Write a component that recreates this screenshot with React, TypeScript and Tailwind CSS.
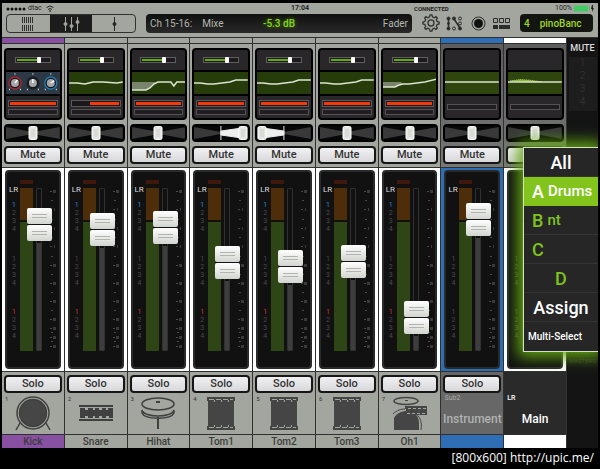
import { ReactNode } from 'react'

type Channel = {
  name: string
  gain?: boolean
  knobs?: boolean
  eq: string
  fill?: string
  bars: number[]
  pan: number
  spread?: 'left' | 'right'
  fader: number
  icon?: ReactNode
}

const Kick = () => (
  <svg width="36" height="36" viewBox="0 0 36 36" fill="none" stroke="#3f403f" strokeWidth="1.5">
    <circle cx="18" cy="17" r="16" />
    <circle cx="18" cy="17" r="13.5" fill="#454645" />
    <path d="M5 27 1 34M31 27l4 7" />
  </svg>
)

const Snare = () => (
  <svg width="36" height="36" viewBox="0 0 36 36" fill="#3f403f">
    <path d="M1 9h34v2H1zM1 23h34v2H1z" />
    <path d="M2 12h5v2h3v-2h5v2h2v-2h4v2h3v-2h4v2h2v-2h5v10h-4v-2h-3v2h-4v-2h-3v2h-4v-2h-2v2h-5v-2H7v2H2z" />
  </svg>
)

const Hihat = () => (
  <svg width="36" height="36" viewBox="0 0 36 36" fill="none" stroke="#3f403f" strokeWidth="1.5">
    <path d="M2 14c2 8 30 8 32 0v3c-3 7-29 7-32 0z" />
    <ellipse cx="18" cy="8" rx="16" ry="6" fill="#a3a69e" />
    <path d="M16 6h4M18 21v12" strokeWidth="2" />
  </svg>
)

const Tom = () => (
  <svg width="36" height="36" viewBox="0 0 36 36" fill="#444544">
    <path d="M4 1h28v4H4zM5 4h26v27H5zM4 30h28v4H4z" />
    <path d="M6 3.500h24M6 31.500h24" stroke="#a3a69e" strokeDasharray="5 2" />
    <path d="M11.500 4v2M18.500 4v2M25.500 4v2M11.500 29v2M18.500 29v2M25.500 29v2" stroke="#a3a69e" />
  </svg>
)

const Overhead = () => (
  <svg width="36" height="36" viewBox="0 0 36 36" fill="#444544">
    <ellipse cx="14" cy="5" rx="12" ry="3.500" fill="none" stroke="#444544" strokeWidth="1.5" />
    <path d="M13 4h3v1h-3z" />
    <path d="M2 34V22c3-6 9-7 14-7 6 0 11 5 11 12v7z" />
    <path d="M1 18c4-4 8-5 12-5M24 18c5 4 6 9 5 16" fill="none" stroke="#444544" />
    <path d="M13 10h22v3H13zM14 13h21v4H14zM13 17h22v2H13z" />
    <path d="M16 12.500h18M15 17.500h18" stroke="#a3a69e" strokeDasharray="3 2" />
  </svg>
)

const tomEq = 'M0 11 6 11 14 12 20 12 28 11 36 10 42 8 54 8'

const channels: Channel[] = [
  { name: 'Kick', gain: true, knobs: true, eq: '', bars: [0, 100], pan: 50, fader: 38, icon: <Kick /> },
  { name: 'Snare', gain: true, eq: 'M0 11 8 11 16 12 24 10 34 10 48 11 54 10', bars: [38, 100], pan: 50, fader: 43, icon: <Snare /> },
  { name: 'Hihat', gain: true, eq: 'M0 18 14 18 18 16 22 12 26 10 39 10 42 14 45 10 54 10', fill: 'M0 10H24L18 16 14 18H0z', bars: [0, 100], pan: 50, fader: 41, icon: <Hihat /> },
  { name: 'Tom1', gain: true, eq: tomEq, bars: [0, 100], pan: 91, spread: 'right', fader: 76, icon: <Tom /> },
  { name: 'Tom2', gain: true, eq: tomEq, bars: [0, 100], pan: 9, spread: 'left', fader: 80, icon: <Tom /> },
  { name: 'Tom3', gain: true, eq: tomEq, bars: [0, 100], pan: 50, fader: 75, icon: <Tom /> },
  { name: 'Oh1', gain: true, eq: 'M0 15 12 15 16 13 20 12 26 12 34 11 42 10 54 7', fill: 'M0 10H18L20 12 16 13 12 15H0z', bars: [0, 100], pan: 50, fader: 131, icon: <Overhead /> },
  { name: 'Instrument', eq: 'M0 10H54', bars: [], pan: 50, fader: 33 },
  { name: 'Main', eq: 'M0 10H54', bars: [], pan: 50, fader: 33 },
]

const Knob = ({ x, color, angle }: { x: number; color: string; angle: number }) => (
  <g transform={`translate(${x} 11)`}>
    <circle r="6" fill="#14181d" stroke={color} strokeWidth="1.5" />
    <circle r="4" fill="#a5a7a8" />
    <path d="M0 0V-4" stroke="#fff" strokeWidth="1.5" transform={`rotate(${angle})`} />
    <path d="M-.5-9h1M-6 6.500h1M5 6.500h1" stroke="#ddd" strokeWidth="1.500" />
  </g>
)

const Processing = ({ channel }: { channel: Channel }) => {
  const { gain, knobs, eq, fill, bars, name } = channel
  const eqColor = knobs ? 'bg-[#2c3945]' : gain ? 'bg-[#273c0b]' : 'bg-[#2e460e]'
  return (
    <div className="mx-[2px] flex h-[72px] flex-col rounded-[4px] border-2 border-black bg-[#2a272b]">
      <div className="flex h-[22px] items-center justify-center border-b-2 border-black">
        {gain && (
          <div className="relative h-[6px] w-9 border border-[#605c60] bg-[#1c1a1c]">
            <div className="mt-px ml-px h-[2px] w-[22px] bg-[#62ad0b]" />
            <div className="absolute -top-px left-[21px] h-[6px] w-1 rounded-[1px] bg-white" />
          </div>
        )}
      </div>
      <svg className={`h-[22px] w-full ${eqColor}`} viewBox="0 0 54 22" preserveAspectRatio="none">
        {knobs ? (
          <>
            <Knob x={9} color="#a72832" angle={40} />
            <Knob x={27} color="#1c2228" angle={0} />
            <Knob x={45} color="#2477a7" angle={55} />
          </>
        ) : (
          <>
            {fill && <path d={fill} fill="#78846b" />}
            {name === 'Main' && <path d="M2 9 12 7.500 20 8 28 9 34 10z" fill="#88bb29" stroke="#a9cc6a" strokeDasharray="1 1" />}
            <path d={eq} fill="none" stroke="#dce3cf" strokeWidth="1.5" />
          </>
        )}
      </svg>
      <div className="flex flex-1 flex-col justify-center gap-[2px] border-t-2 border-black px-[2px]">
        {bars.length > 0 && (
          <div className="flex h-[7px] items-center border border-[#5c575b] bg-[#1b181b] px-px">
            <div className="h-[3px] bg-[#f23b08]" style={{ width: `${bars[1] - bars[0]}%`, marginLeft: `${bars[0]}%` }} />
          </div>
        )}
        <div className="h-[6px] border border-[#555155] bg-[#201e20]" />
      </div>
    </div>
  )
}

const Pan = ({ pan, spread }: { pan: number; spread?: string }) => (
  <div className="relative mx-[2px] mt-1 h-[18px] overflow-hidden rounded-[4px] border-2 border-black bg-[#070707]">
    <svg className="h-full w-full" viewBox="0 0 56 14" preserveAspectRatio="none">
      <path d="M0 1 28 6 56 1V13L28 8 0 13z" fill="#383938" />
      {spread === 'right' && <path d="M28 0v14M28 5 50 2V12L28 9z" fill="#eee" stroke="#eee" />}
      {spread === 'left' && <path d="M28 0v14M28 5 6 2V12L28 9z" fill="#eee" stroke="#eee" />}
    </svg>
    <div
      className="absolute top-0 flex h-[14px] w-[9px] -translate-x-1/2 justify-center gap-px rounded-[2px] border border-white bg-[#e4e6e1] py-[2px]"
      style={{ left: `${pan}%` }}
    >
      <div className="w-px bg-[#ced0cb]" />
      <div className="w-px bg-[#ced0cb]" />
    </div>
  </div>
)

const PadButton = ({ children }: { children: string }) => (
  <button className="mx-[2px] h-[18px] rounded-[4px] border-2 border-[#161616] bg-linear-to-b from-[#f1f1f3] to-[#d8d8da] text-[11px] leading-[14px] font-medium text-[#333]">
    {children}
  </button>
)

const Digits = ({ top, color }: { top: string; color: string }) => (
  <div className={`absolute left-[5px] flex flex-col text-[7px] leading-[8px] text-[#4a4a4a] ${top}`}>
    <span className={color}>1</span>
    <span>2</span>
    <span>3</span>
    <span>4</span>
  </div>
)

const Cap = () => (
  <div className="flex h-4 flex-col items-center justify-center gap-[2px] rounded-[2px] bg-linear-to-b from-white to-[#d2d5cf]">
    <div className="h-px w-[15px] bg-[#b1b4ae]" />
    <div className="h-px w-[15px] bg-[#b1b4ae]" />
  </div>
)

const Fader = ({ channel }: { channel: Channel }) => {
  const { name, fader } = channel
  const isMain = name === 'Main'
  const sub = name === 'Instrument' || isMain
  return (
    <div className="relative mx-[3px] h-[199px] rounded-[4px] border-2 border-[#292b2b] bg-[#111112]">
      {!isMain && <span className="absolute top-[12px] left-[2px] text-[8px] leading-[12px] text-[#ddd]">LR</span>}
      {!sub && <Digits top="top-[29px]" color="text-[#2f86d6]" />}
      <Digits top="top-[83px]" color="text-[#4a4a4a]" />
      <Digits top="top-[136px]" color={sub ? 'text-[#4a4a4a]' : 'text-[#c93a3a]'} />
      <div className="absolute top-[8px] left-[13px] flex w-[13px] flex-col">
        <div className="h-1 bg-[#42170b]" />
        <div className="mt-1 h-8 bg-[#4e2d0b]" />
        <div className="mt-[2px] h-[129px] bg-[#2e4515]" />
      </div>
      <div className="absolute top-[16px] left-[29px] flex h-[163px] w-[6px] flex-col justify-end rounded-[1px] border border-[#303031]">
        <div className="bg-[#3d3d3e]" style={{ height: 145 - fader }} />
      </div>
      <svg className="absolute top-[17px] left-[42px]" width="8" height="165" stroke="#4a4a4a" fill="none">
        <path d="M1 2.500h2M1 20.500h2M1 39.500h2M1 57.500h2M1 76.500h2M1 94.500h2M1 112.500h2M1 130.500h2M1 139.500h2M1 148.500h2M1 157.500h2M2 11.500h2M2 30.500h2M2 48.500h2M2 67.500h2M2 85.500h2M2 103.500h2M2 121.500h2M2 143.500h2M2 152.500h2" />
        <path
          d="M4 2.500h3M5 20.500h1M5 39.500h1M5 57.500h1M4 76.500h3M4 94.500h3M4 112.500h3M4 130.500h3M4 139.500h3M4 148.500h3M4 157.500h3"
          stroke="#3a3a3a"
          strokeWidth="3"
        />
      </svg>
      <div className="absolute left-[20px] w-[25px]" style={{ top: fader - 2 }}>
        <Cap />
        <div className="h-px bg-[#141414]" />
        <Cap />
      </div>
    </div>
  )
}

const Strip = ({ channel, index }: { channel: Channel; index: number }) => {
  const { name, pan, spread, icon } = channel
  const isMain = name === 'Main'
  const isSub = name === 'Instrument'
  const tint = isSub ? 'bg-[#2f6db5]' : isMain ? 'bg-white' : name === 'Kick' ? 'bg-[#8850a2]' : 'bg-[#a3a69e]'
  return (
    <div className="flex min-w-0 flex-1 flex-col border-r border-[#30312f]">
      <div className={`h-[6px] border-b border-[#30312f] ${tint}`} />
      <div
        className={`flex h-[123px] flex-col pt-1 ${
          isSub || isMain ? 'bg-linear-to-b from-[#5c5d5c] to-[#777877]' : 'bg-[#a3a69e]'
        }`}
      >
        <Processing channel={channel} />
        <Pan pan={pan} spread={spread} />
        <div className="mt-1 flex flex-col">
          <PadButton>Mute</PadButton>
        </div>
      </div>
      <div className={`border-t border-[#30312f] py-[2px] ${isSub ? 'bg-[#2f6db5]' : 'bg-white'}`}>
        <Fader channel={channel} />
      </div>
      <div
        className={`relative flex h-[63px] flex-col border-t border-[#30312f] pt-[3px] ${
          isMain ? 'bg-[#2a2a2b]' : isSub ? 'bg-[#666766]' : 'bg-[#a3a69e]'
        }`}
      >
        {!isMain && <PadButton>Solo</PadButton>}
        {icon && (
          <>
            <span className="absolute top-[24px] left-[3px] text-[6px] leading-[6px] text-[#333]">{index + 1}</span>
            <div className="mt-[3px] flex justify-center">{icon}</div>
          </>
        )}
        {isSub && (
          <>
            <span className="mt-px pl-[3px] text-[7px] leading-[9px] text-[#aaa]">Sub2</span>
            <span className="mt-2 text-center text-[12px] leading-[16px] font-medium text-[#b0b1b1]">Instrument</span>
          </>
        )}
        {isMain && (
          <>
            <span className="mt-[19px] pl-[3px] text-[7px] leading-[9px] font-medium text-white">LR</span>
            <span className="mt-2 text-center text-[12px] leading-[16px] font-medium text-white">Main</span>
          </>
        )}
      </div>
      <div className={`h-[14px] border-t border-[#30312f] text-center text-[10px] leading-[14px] font-medium text-[#3c3d3b] ${tint}`}>
        {icon && name}
      </div>
    </div>
  )
}

const ViewTabs = () => (
  <div className="flex h-[19px] w-[130px] overflow-hidden rounded-[4px] border border-[#30312f]">
    <button aria-label="Overview" className="flex flex-1 items-center justify-center">
      <svg width="12" height="16" stroke="#30312f">
        <path d="M.5 1v6M2.500 1v6M4.500 1v6M6.500 1v6M8.500 1v6M10.500 1v6M.5 9v6M2.500 9v6M4.500 9v6M6.500 9v6M8.500 9v6M10.500 9v6" />
      </svg>
    </button>
    <button aria-label="Mixer" className="flex flex-1 items-center justify-center bg-[#1c1c1c]">
      <svg width="18" height="16" stroke="#a3a69e" fill="#a3a69e">
        <path d="M3.500 1v14M9.500 1v14M15.500 1v14" />
        <circle cx="3.500" cy="8" r="1.500" />
        <circle cx="9.500" cy="10" r="1.500" />
        <circle cx="15.500" cy="6" r="1.500" />
      </svg>
    </button>
    <button aria-label="Channel" className="flex flex-1 items-center justify-center">
      <svg width="8" height="16" stroke="#252525" fill="#252525">
        <path d="M4.500 1v14" />
        <circle cx="4.500" cy="8" r="1.500" />
      </svg>
    </button>
  </div>
)

const Tools = () => (
  <div className="flex items-center gap-[6px] text-[#2d2e2c]">
    <button aria-label="Settings">
      <svg width="18" height="18" viewBox="-9.500 -9.500 19 19" fill="none" stroke="currentColor" strokeWidth="1.300">
        <path d="M-1.500-6.500-1-8.500H1L1.500-6.500 3.500-5.600 5.300-6.700 6.700-5.300 5.600-3.500 6.500-1.500 8.500-1V1L6.500 1.500 5.600 3.500 6.700 5.300 5.300 6.700 3.500 5.600 1.500 6.500 1 8.500H-1L-1.500 6.500-3.500 5.600-5.300 6.700-6.700 5.300-5.600 3.500-6.500 1.500-8.500 1V-1L-6.500-1.500-5.600-3.500-6.700-5.300-5.300-6.700-3.500-5.600z" />
        <circle r="3.200" />
      </svg>
    </button>
    <button aria-label="Routing">
      <svg width="17" height="15" fill="none" stroke="currentColor">
        <path d="M2.500 3v9M8 3l6 9" strokeWidth="1.500" />
        <g fill="currentColor">
          <circle cx="2.500" cy="2.500" r="1.500" />
          <circle cx="8" cy="2.500" r="1.500" />
          <circle cx="2.500" cy="7.500" r="1" />
          <circle cx="2.500" cy="12.500" r="1.500" />
          <circle cx="14" cy="12.500" r="1.500" />
        </g>
        <circle cx="14" cy="2.500" r="1.500" />
        <circle cx="14" cy="7.500" r="1.500" />
        <circle cx="8" cy="12.500" r="1.500" />
      </svg>
    </button>
    <button aria-label="Record" className="ml-[2px]">
      <svg width="15" height="15">
        <circle cx="7.500" cy="7.500" r="6.500" fill="none" stroke="currentColor" />
        <circle cx="7.500" cy="7.500" r="4.500" fill="#111" />
      </svg>
    </button>
    <button aria-label="Groups" className="ml-px">
      <svg width="17" height="13" fill="none" stroke="currentColor">
        <path d="M.5 1.500h4v4h-4zM6.500 1.500h4v4h-4zM12.500 1.500h4v4h-4z" />
        <path d="M0 8h5v4H0zM6 8h11v4H6z" fill="currentColor" stroke="none" />
      </svg>
    </button>
  </div>
)

const GroupMenu = () => {
  const item = 'flex h-[29px] w-full items-center border-b border-[#343435] text-[18px] leading-[29px]'
  return (
    <div className="absolute top-[144px] right-0 w-[75px] border border-r-0 border-[#d5dfcb] bg-[#262627] font-medium text-white shadow-[0_0_14px_5px_#64a812]">
      <button className={`${item} justify-center`}>All</button>
      <button className="flex h-[29px] w-full items-center gap-1 bg-[#82c31c] pl-2 text-[18px]">
        A <span className="text-[15px]">Drums</span>
      </button>
      <button className={`${item} gap-1 pl-2 text-[#7ec21c]`}>
        B <span className="text-[15px]">nt</span>
      </button>
      <button className={`${item} pl-2 text-[#7ec21c]`}>C</button>
      <button className={`${item} justify-center text-[#7ec21c]`}>D</button>
      <button className={`${item} justify-center`}>Assign</button>
      <button className="flex h-[29px] w-full items-center pl-1 text-[10px] whitespace-nowrap">Multi-Select</button>
    </div>
  )
}

export default function App() {
  return (
    <div className="min-h-screen bg-black px-[2px] pt-[3px] font-[Roboto,sans-serif]">
      <main className="relative overflow-hidden bg-[#161617]">
        <header className="bg-[#a3a69e] text-[#252525]">
          <div className="grid h-[11px] grid-cols-3 items-center px-1 text-[7px] leading-[11px]">
            <div className="flex items-center gap-[2px]">
              <svg width="20" height="4">
                <path d="M2 2h18" stroke="#111" strokeWidth="3" strokeLinecap="round" strokeDasharray="0 4" />
              </svg>
              <span>dtac</span>
              <svg className="ml-[2px]" width="8" height="7" fill="none" stroke="#222">
                <path d="M.5 2.500q3.500-3 7 0M2 4.500q2-2 4 0" />
                <circle cx="4" cy="6" r=".5" />
              </svg>
            </div>
            <span className="text-center font-bold">17:04</span>
            <div className="flex items-center justify-between pl-4">
              <span className="text-[6px] font-bold">CONNECTED</span>
              <span className="flex items-center gap-[2px]">
                100%
                <svg width="20" height="7">
                  <path d="M0 .5h14v6H0zM15 2h1v3h-1z" fill="#43ca65" />
                  <path d="M18 0 17 4h1v3l2-4h-1V0z" fill="#222" />
                </svg>
              </span>
            </div>
          </div>
          <div className="flex h-[23px] items-start gap-[10px] pr-[5px] pl-1">
            <ViewTabs />
            <div className="grid h-[19px] min-w-0 flex-1 grid-cols-3 items-center rounded-[4px] bg-linear-to-b from-[#101010] to-[#292929] px-1 text-[10px] text-[#b4b8ae]">
              <span className="flex gap-[10px] whitespace-nowrap">
                <span>Ch 15-16:</span>
                <span>Mixe</span>
              </span>
              <span className="text-center font-medium text-[#86d918] [text-shadow:0_0_4px_#568f12]">-5.3 dB</span>
              <span className="text-right">Fader</span>
            </div>
            <Tools />
            <button className="flex h-[18px] w-[73px] items-center gap-[10px] rounded-[4px] bg-[#131510] pl-1 text-[10px] font-medium text-[#a0d51e]">
              <span>4</span>
              <span>pinoBanc</span>
            </button>
          </div>
        </header>
        <div className="flex border-t border-[#30312f]">
          {channels.map((channel, i) => (
            <Strip key={channel.name} channel={channel} index={i} />
          ))}
          <aside className="flex w-[31px] flex-col items-center bg-[#141415]">
            <span className="mt-[5px] text-[9px] leading-[10px] font-medium text-[#ddd]">MUTE</span>
            <div className="mt-1 flex h-[54px] w-7 flex-col items-center gap-px bg-[#1d1d1e] text-[10px] leading-[12px] text-[#2e2e2f]">
              <span>1</span>
              <span>2</span>
              <span>3</span>
              <span>4</span>
            </div>
            <span className="mt-[246px] text-[6px] leading-[8px] text-[#353536]">MASTERS</span>
          </aside>
        </div>
        <GroupMenu />
      </main>
      <footer className="pt-[2px] pr-1 text-right font-['Open_Sans',sans-serif] text-[12px] leading-[16px] font-medium text-white">
        [800x600] http://upic.me/
      </footer>
    </div>
  )
}
